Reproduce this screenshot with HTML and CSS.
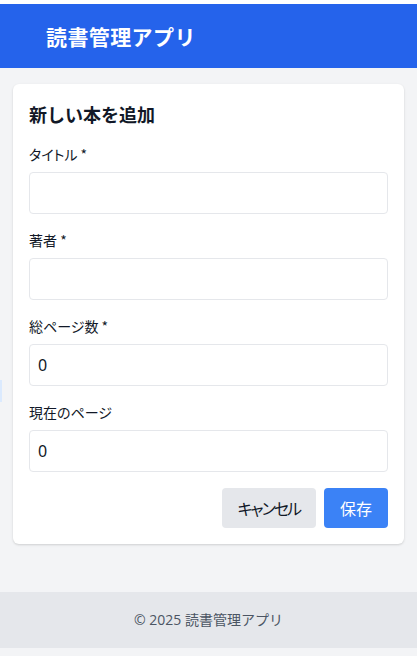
FILE: index.html
```html
<!DOCTYPE html>
<html lang="ja">
<head>
<meta charset="utf-8">
<title>読書管理アプリ</title>
<link rel="stylesheet" href="styles.css">
</head>
<body>
<div class="page">
  <div class="top-strip"></div>
  <header class="app-header">
    <h1 class="app-title">読書管理アプリ</h1>
  </header>
  <main class="main">
    <section class="card">
      <h2 class="card-title">新しい本を追加</h2>
      <form class="form">
        <div class="field">
          <label class="label">タイトル *</label>
          <input class="input" type="text" value="">
        </div>
        <div class="field">
          <label class="label">著者 *</label>
          <input class="input" type="text" value="">
        </div>
        <div class="field">
          <label class="label">総ページ数 *</label>
          <input class="input" type="text" value="0">
        </div>
        <div class="field">
          <label class="label">現在のページ</label>
          <input class="input" type="text" value="0">
        </div>
        <div class="actions">
          <button type="button" class="btn btn-cancel">キャンセル</button>
          <button type="button" class="btn btn-save">保存</button>
        </div>
      </form>
    </section>
  </main>
  <footer class="app-footer">© 2025 読書管理アプリ</footer>
  <span class="edge-hint"></span>
</div>
</body>
</html>
```
FILE: styles.css
```css
html, body {
  margin: 0;
  padding: 0;
}
body {
  font-family: "Noto Sans CJK JP", "Noto Sans", sans-serif;
  font-feature-settings: "palt";
  color: #111827;
  background: #f3f4f6;
}
.page {
  position: relative;
  min-height: 100vh;
  box-sizing: border-box;
  display: flex;
  flex-direction: column;
  padding-bottom: 8px;
  background: #f3f4f6;
}
.top-strip {
  height: 4px;
  background: #ffffff;
}
.app-header {
  background: #2563eb;
  height: 64px;
  display: flex;
  align-items: center;
  padding-left: 46px;
  box-sizing: border-box;
}
.app-title {
  margin: 0;
  color: #ffffff;
  font-size: 21px;
  font-weight: 700;
  line-height: 30px;
  letter-spacing: 0.4px;
  font-feature-settings: normal;
}
.main {
  flex: 1;
  padding: 16px 13px;
}
.card {
  background: #ffffff;
  border-radius: 6px;
  box-shadow: 0 1px 3px rgba(0,0,0,0.1), 0 1px 2px rgba(0,0,0,0.06);
  padding: 16px;
}
.card-title {
  margin: 0 0 16px;
  font-size: 18px;
  line-height: 28px;
  font-weight: 700;
  color: #111827;
  font-feature-settings: normal;
}
.form {
  display: flex;
  flex-direction: column;
  gap: 16px;
}
.field {
  display: flex;
  flex-direction: column;
  gap: 8px;
}
.label {
  font-size: 14px;
  line-height: 20px;
  color: #111827;
}
.input {
  box-sizing: border-box;
  height: 42px;
  width: 100%;
  border: 1px solid #e5e7eb;
  border-radius: 4px;
  padding: 8px;
  font-family: "Noto Sans", "Noto Sans CJK JP", sans-serif;
  font-size: 16px;
  line-height: 24px;
  color: #111827;
  background: #ffffff;
  outline: none;
}
.actions {
  display: flex;
  justify-content: flex-end;
  gap: 8px;
}
.btn {
  border: none;
  border-radius: 4px;
  height: 40px;
  padding: 0 16px;
  font-family: "Noto Sans CJK JP", "Noto Sans", sans-serif;
  font-feature-settings: "palt";
  font-size: 16px;
  line-height: 24px;
  cursor: pointer;
}
.btn-cancel {
  background: #e5e7eb;
  color: #111827;
  letter-spacing: -2px;
}
.btn-save {
  background: #3b82f6;
  color: #ffffff;
}
.app-footer {
  background: #e5e7eb;
  color: #4b5563;
  text-align: center;
  font-family: "Open Sans", "Noto Sans CJK JP", sans-serif;
  font-size: 14px;
  line-height: 24px;
  padding: 16px 0;
  font-feature-settings: normal;
}
.edge-hint {
  position: absolute;
  left: 0;
  top: 380px;
  width: 2px;
  height: 22px;
  background: #dbeafe;
}
```
